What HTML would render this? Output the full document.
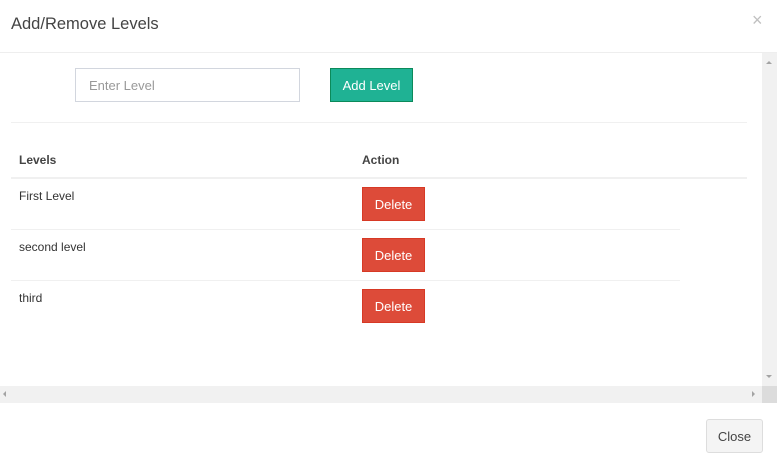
<!DOCTYPE html>
<html><head><style>
body{margin:0;width:777px;height:465px;background:#fff;font-family:"Liberation Sans",sans-serif;position:relative;overflow:hidden;color:#333}
.a{position:absolute}
.btn{position:absolute;color:#fff;font-size:13px;text-align:center;box-sizing:border-box}
.del{background:#dd4b39;border:1px solid #d73925;width:63px;height:34px;line-height:33px;left:362px}
.line{position:absolute;height:1px;background:#f0f0f0}
.t{position:absolute;font-size:12px;color:#333}
</style></head><body>
<div class="a" style="left:11px;top:15px;font-size:16.5px;color:#444">Add/Remove Levels</div>
<div class="a" style="left:752px;top:10px;font-size:18px;color:#c0c0c0">×</div>
<div class="line" style="left:0;top:52px;width:777px;background:#eee"></div>
<div class="a" style="left:75px;top:68px;width:225px;height:34px;box-sizing:border-box;border:1px solid #d2d6de;font-size:13px;color:#999;line-height:33px;padding-left:13px">Enter Level</div>
<div class="btn" style="left:330px;top:68px;width:83px;height:34px;line-height:33px;background:#1fb294;border:1px solid #0b8a5a">Add Level</div>
<div class="line" style="left:11px;top:122px;width:736px"></div>
<div class="t" style="left:19px;top:153px;font-weight:bold;color:#444">Levels</div>
<div class="t" style="left:362px;top:153px;font-weight:bold;color:#444">Action</div>
<div class="line" style="left:11px;top:177px;width:736px;height:2px"></div>
<div class="t" style="left:19px;top:189px">First Level</div>
<div class="btn del" style="top:187px">Delete</div>
<div class="line" style="left:11px;top:229px;width:669px"></div>
<div class="t" style="left:19px;top:240px">second level</div>
<div class="btn del" style="top:238px">Delete</div>
<div class="line" style="left:11px;top:280px;width:669px"></div>
<div class="t" style="left:19px;top:291px">third</div>
<div class="btn del" style="top:289px">Delete</div>
<div class="a" style="left:762px;top:53px;width:15px;height:333px;background:#f1f1f1"></div>
<div class="a" style="left:766px;top:61px;width:0;height:0;border-left:3px solid transparent;border-right:3px solid transparent;border-bottom:3px solid #a3a3a3"></div>
<div class="a" style="left:766px;top:375px;width:0;height:0;border-left:3px solid transparent;border-right:3px solid transparent;border-top:3px solid #a3a3a3"></div>
<div class="a" style="left:0;top:386px;width:762px;height:17px;background:#f1f1f1"></div>
<div class="a" style="left:762px;top:386px;width:15px;height:17px;background:#dcdcdc"></div>
<div class="a" style="left:3px;top:391px;width:0;height:0;border-top:3px solid transparent;border-bottom:3px solid transparent;border-right:3px solid #a3a3a3"></div>
<div class="a" style="left:752px;top:391px;width:0;height:0;border-top:3px solid transparent;border-bottom:3px solid transparent;border-left:3px solid #a3a3a3"></div>
<div class="a" style="left:706px;top:419px;width:57px;height:34px;box-sizing:border-box;border:1px solid #ddd;border-radius:3px;background:#f4f4f4;font-size:13px;color:#444;text-align:center;line-height:33px">Close</div>
</body></html>
